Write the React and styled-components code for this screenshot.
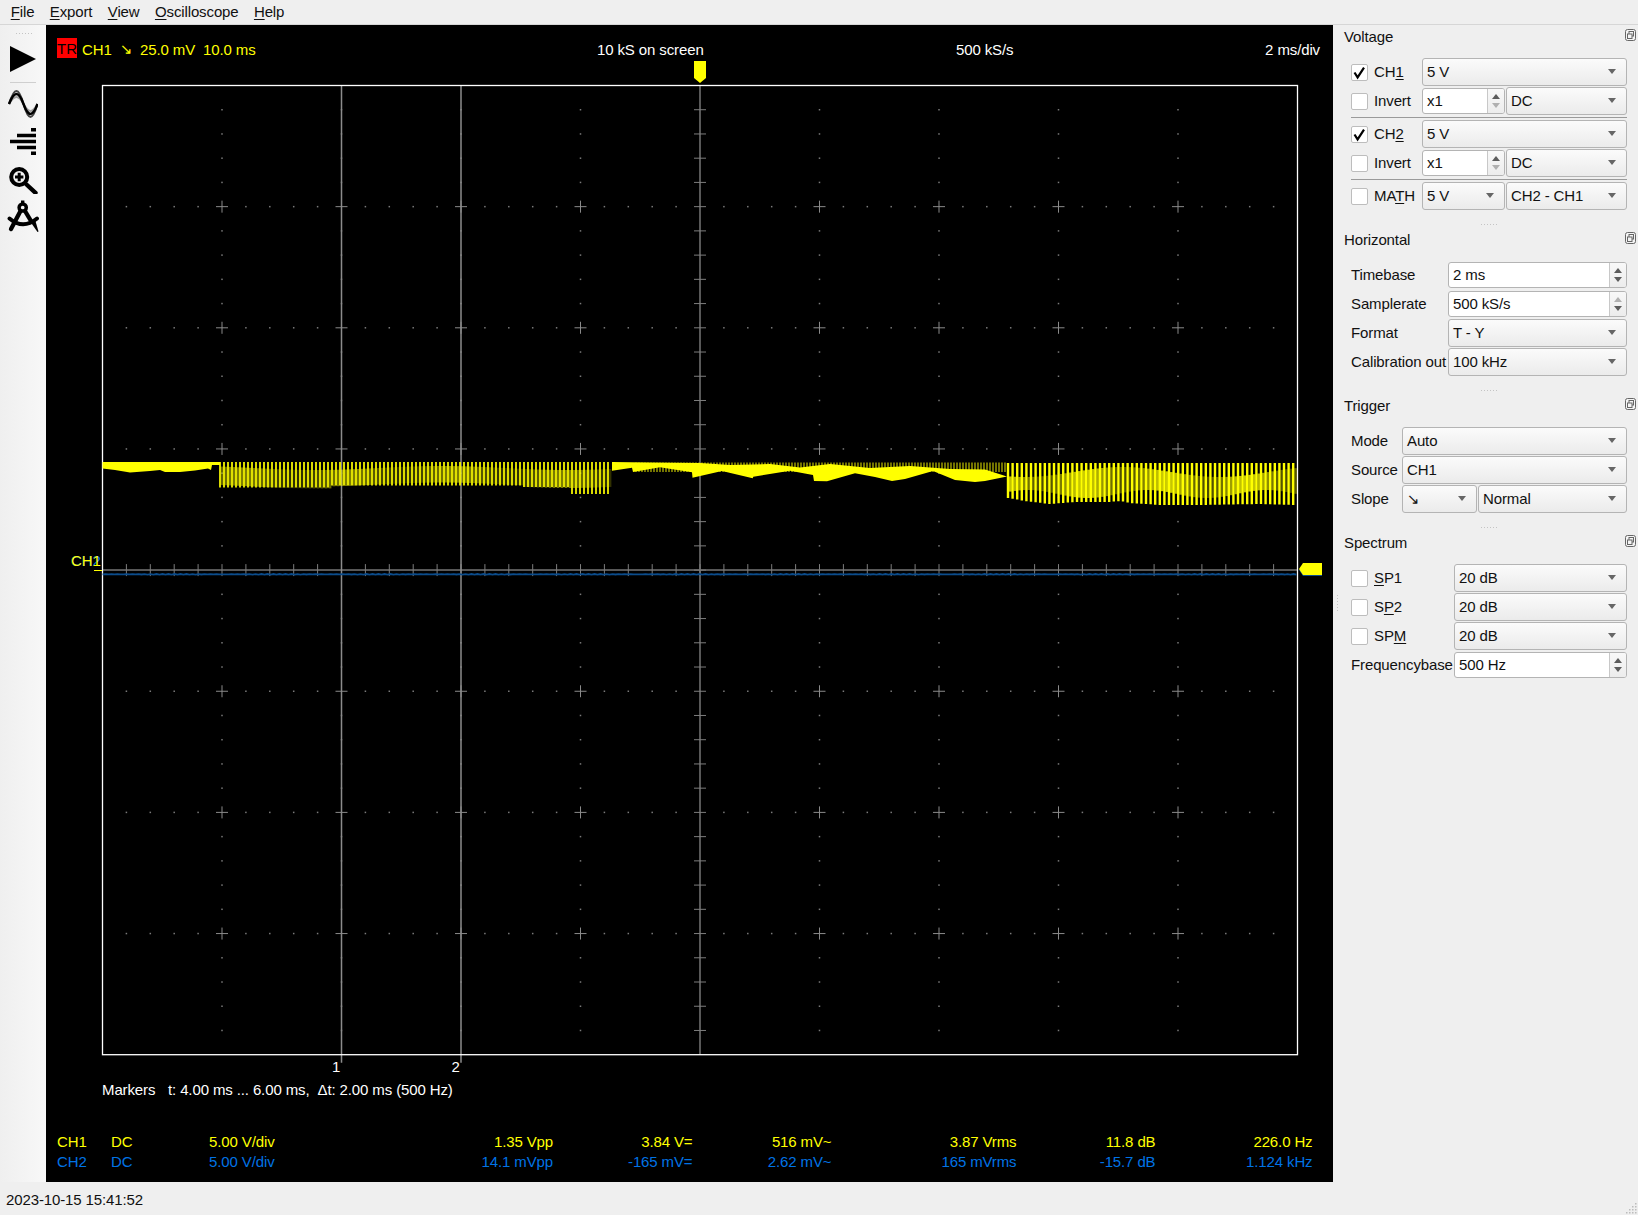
import * as React from "react";
import styled, { createGlobalStyle } from "styled-components";

const YELLOW = "#ffff00";
const BLUE = "#0073e6";
const FONT = `"Liberation Sans", "DejaVu Sans", sans-serif`;

const GlobalStyle = createGlobalStyle`
  html, body {
    margin: 0;
    padding: 0;
    background: #efefef;
  }
  body {
    font-family: ${FONT};
    font-size: 15px;
    letter-spacing: -0.12px;
    color: #111;
  }
`;

const Window = styled.div`
  width: 1638px;
  height: 1215px;
  display: flex;
  flex-direction: column;
  overflow: hidden;
  background: #efefef;
`;

const MenuBar = styled.div`
  height: 24px;
  flex: none;
  display: flex;
  align-items: center;
  padding-left: 3px;
  border-bottom: 1px solid #d6d6d6;
`;

const MenuItem = styled.div`
  padding: 0 7.7px;
  margin-bottom: 1px;
`;

const Mnemonic = styled.span`
  text-decoration: underline;
  text-underline-offset: 2px;
`;

const Main = styled.div`
  flex: 1;
  display: flex;
  min-height: 0;
`;

const ToolBar = styled.div`
  width: 46px;
  flex: none;
  display: flex;
  flex-direction: column;
  align-items: center;
  background: linear-gradient(90deg, #efefef, #f8f8f8);
`;

const ToolHandle = styled.div`
  width: 17px;
  height: 3px;
  margin-top: 7px;
  margin-bottom: 5px;
  background-image: radial-gradient(#c4c4c4 0.6px, transparent 0.7px);
  background-size: 3px 3px;
`;

const ToolButton = styled.div`
  width: 36px;
  height: 37.5px;
  display: flex;
  align-items: center;
  justify-content: center;
`;

const ToolSeparator = styled.div`
  width: 26px;
  height: 1px;
  margin: 4px 0 3px;
  background: #cfcfcf;
`;

const Scope = styled.div`
  width: 1287px;
  flex: none;
  background: #000;
  color: #fff;
  display: flex;
  flex-direction: column;
`;

const ScopeHeader = styled.div`
  height: 35px;
  box-sizing: border-box;
  flex: none;
  display: grid;
  grid-template-columns: 540px 359px 1fr auto;
  align-items: center;
  padding: 13px 13px 0 11px;
`;

const TriggerInfo = styled.div`
  display: flex;
  align-items: center;
  color: ${YELLOW};
  white-space: pre;
`;

const TriggerBadge = styled.span`
  width: 20px;
  height: 20px;
  margin: -2px 5px 0 0;
  background: #ff0000;
  color: #000;
  display: flex;
  align-items: center;
  justify-content: center;
`;

const TriggerField = styled.span`
  width: ${(props) => props.$width}px;
`;

const PlotSvg = styled.svg`
  display: block;
  flex: none;
  width: 1287px;
  height: 1015px;
`;

const MarkerLine = styled.div`
  height: 20px;
  flex: none;
  margin-top: 4px;
  padding-left: 56px;
  display: flex;
  align-items: center;
  white-space: pre;
`;

const MarkerTitle = styled.span`
  width: 66px;
`;

const Measurements = styled.div`
  margin-top: auto;
  padding: 0 21px 11px 11px;
  display: grid;
  grid-template-columns: 54px 98px 100px 244px 139.5px 139px 185px 139px 157px;
  grid-auto-rows: 20px;
  align-items: center;
`;

const Cell = styled.div`
  color: ${(props) => props.$color};
  text-align: ${(props) => (props.$right ? "right" : "left")};
`;

const Panel = styled.div`
  flex: 1;
  display: flex;
  min-width: 0;
`;

const SplitterRail = styled.div`
  width: 11px;
  flex: none;
  display: flex;
  align-items: center;
  padding-left: 4px;
  box-sizing: border-box;
`;

const SplitterGrip = styled.div`
  width: 1px;
  height: 17px;
  background: repeating-linear-gradient(180deg, #c4c4c4 0 1px, transparent 1px 3px);
`;

const Docks = styled.div`
  flex: 1;
  padding-right: 2px;
  min-width: 0;
`;

const DockTitle = styled.div`
  height: 22px;
  display: flex;
  align-items: center;
  justify-content: space-between;
`;

const FloatIcon = styled.svg`
  width: 11px;
  height: 12px;
  margin-top: -2px;
`;

const DockBody = styled.div`
  margin: 11px 9px 0 7px;
  display: grid;
  grid-template-columns: ${(props) => props.$columns};
  column-gap: 1px;
  row-gap: 1px;
  align-items: center;
`;

const DockHandle = styled.div`
  width: 17px;
  height: 1px;
  margin: 14px auto 3px;
  position: relative;
  left: -1px;
  background: repeating-linear-gradient(90deg, #c4c4c4 0 1px, transparent 1px 3px);
`;

const Separator = styled.div`
  grid-column: 1 / -1;
  height: 1px;
  margin: 1px 0;
  background: #9a9a9a;
`;

const FieldLabel = styled.div`
  white-space: nowrap;
  margin-bottom: 1px;
`;

const CheckRow = styled.div`
  display: flex;
  align-items: center;
  gap: 6px;
  white-space: nowrap;
`;

const CheckText = styled.span`
  margin-bottom: 1px;
`;

const CheckBox = styled.div`
  width: 17px;
  height: 17px;
  box-sizing: border-box;
  flex: none;
  background: #fff;
  border: 1px solid #bdbdbd;
  border-radius: 2px;
  display: flex;
`;

const ComboBox = styled.div`
  grid-column: span ${(props) => props.$span || 1};
  height: 28px;
  box-sizing: border-box;
  border: 1px solid #b4b4b4;
  border-radius: 3px;
  background: linear-gradient(180deg, #fbfbfb, #ebebeb);
  display: flex;
  align-items: center;
  justify-content: space-between;
  padding: 0 10px 1px 4px;
  white-space: nowrap;
  min-width: 0;
`;

const Caret = styled.div`
  width: 0;
  height: 0;
  flex: none;
  border-left: 4.5px solid transparent;
  border-right: 4.5px solid transparent;
  border-top: 5px solid #666;
`;

const SpinBox = styled.div`
  grid-column: span ${(props) => props.$span || 1};
  height: 26px;
  margin: 1px 0;
  box-sizing: border-box;
  border: 1px solid #b4b4b4;
  border-radius: 3px;
  background: #fff;
  display: flex;
  align-items: center;
  overflow: hidden;
`;

const SpinValue = styled.div`
  flex: 1;
  padding: 0 0 1px 4px;
`;

const SpinButtons = styled.div`
  width: 16px;
  height: 100%;
  flex: none;
  border-left: 1px solid #c8c8c8;
  background: linear-gradient(180deg, #f8f8f8, #ececec);
  display: flex;
  flex-direction: column;
  align-items: center;
  justify-content: center;
  gap: 4px;
`;

const SpinArrow = styled.div`
  width: 0;
  height: 0;
  border-left: 4.5px solid transparent;
  border-right: 4.5px solid transparent;
  ${(props) => (props.$up ? "border-bottom" : "border-top")}: 5px solid ${(props) =>
    props.$dim ? "#b0b0b0" : "#5c5c5c"};
`;

const StatusBar = styled.div`
  height: 33px;
  box-sizing: border-box;
  flex: none;
  display: flex;
  align-items: center;
  justify-content: space-between;
  padding: 1px 1px 0 6px;
`;

const SizeGrip = styled.svg`
  width: 11px;
  height: 11px;
  align-self: flex-end;
  margin-bottom: 1px;
`;

const Combo = ({ value, span }) => (
  <ComboBox $span={span}>
    <span>{value}</span>
    <Caret />
  </ComboBox>
);

const Spin = ({ value, upDim, downDim, span }) => (
  <SpinBox $span={span}>
    <SpinValue>{value}</SpinValue>
    <SpinButtons>
      <SpinArrow $up $dim={upDim} />
      <SpinArrow $dim={downDim} />
    </SpinButtons>
  </SpinBox>
);

const Check = ({ checked, children }) => (
  <CheckRow>
    <CheckBox>
      {checked && (
        <svg width="15" height="15" viewBox="0 0 15 15">
          <path d="M2.5 7.5 L5.6 12.4 L12 2.6" fill="none" stroke="#000" strokeWidth="2.2" />
        </svg>
      )}
    </CheckBox>
    <CheckText>{children}</CheckText>
  </CheckRow>
);

const Dock = ({ title, columns, last, children }) => (
  <div>
    <DockTitle>
      {title}
      <FloatIcon viewBox="0 0 11 12">
        <rect x="0.5" y="0.5" width="10" height="11" rx="2" fill="#f4f4f4" stroke="#666" />
        <rect x="4" y="2.5" width="4.5" height="4.5" fill="none" stroke="#666" />
        <rect x="2.5" y="5" width="4.5" height="4.5" fill="#f4f4f4" stroke="#666" />
      </FloatIcon>
    </DockTitle>
    <DockBody $columns={columns}>{children}</DockBody>
    {!last && <DockHandle />}
  </div>
);

// half-period arches for the toolbar sine icon, amplitude a around the middle
const sinePath = (a) =>
  `M1 15C6.4 ${15 - 1.33 * a} 10.6 ${15 - 1.33 * a} 15.5 15S24.6 ${15 + 1.33 * a} 29.5 15`;

// plot geometry, in page coordinates so the numbers can be read off the screenshot
const LEFT = 102.5;
const TOP = 85.5;
const DIV_W = 119.5;
const DIV_H = 121.15;
const RIGHT = LEFT + DIV_W * 10;
const BOTTOM = TOP + DIV_H * 8;
const MID_X = LEFT + DIV_W * 5;
const MID_Y = TOP + DIV_H * 4;

const lerp = (pts, x) => {
  for (let i = 1; i < pts.length; i++) {
    if (x <= pts[i][0]) {
      const [x0, y0] = pts[i - 1];
      const [x1, y1] = pts[i];
      return y0 + ((y1 - y0) * (x - x0)) / (x1 - x0 || 1);
    }
  }
  return pts[pts.length - 1][1];
};

const polygon = (top, bottom) =>
  [...top, ...[...bottom].reverse()].map((p) => p.join(",")).join(" ");

const gridPath = () => {
  const crosses = [];
  const dots = [];
  for (let i = 0; i <= 10; i++) {
    for (let j = 0; j <= 8; j++) {
      const x = LEFT + i * DIV_W;
      const y = TOP + j * DIV_H;
      const inside = i > 0 && i < 10 && j > 0 && j < 8;
      if (inside && i !== 5 && j !== 4) crosses.push(`M${x - 6} ${y}H${x + 6}M${x} ${y - 6}V${y + 6}`);
      for (let k = 1; k < 5; k++) {
        if (j > 0 && j < 8 && j !== 4 && i < 10) dots.push([x + (k * DIV_W) / 5, y]);
        if (i > 0 && i < 10 && i !== 5 && j < 8) dots.push([x, y + (k * DIV_H) / 5]);
      }
    }
  }
  return { crosses: crosses.join(""), dots };
};

const axisTicks = () => {
  let d = "";
  for (let i = 1; i < 50; i++) {
    const x = LEFT + (i * DIV_W) / 5;
    d += `M${x} ${MID_Y - 6}V${MID_Y + 6}`;
  }
  for (let j = 1; j < 40; j++) {
    const y = TOP + (j * DIV_H) / 5;
    d += `M${MID_X - 6} ${y}H${MID_X + 6}`;
  }
  return d;
};

const BOTTOM_A = [[102.5, 468.5], [115, 470], [130, 472.5], [150, 471], [160, 470], [165, 472], [180, 472], [195, 470.5], [208, 468.5], [211, 470], [212, 465], [220, 465]];
const BOTTOM_C = [[612, 470.7], [632, 467.7], [633, 472], [660, 467.3], [692, 472.3], [692.5, 477.7], [722, 471], [752.7, 478.3], [753.3, 476.7], [790, 470.7], [813, 475], [814, 481], [827, 481.3], [855, 473.3], [875, 477], [892, 481], [905, 479], [933, 471], [955, 480], [975, 482], [985, 481], [1007, 476.5]];
const TOP_C = [[612, 462], [650, 462.5], [700, 463], [730, 465], [770, 464], [800, 467.5], [830, 464], [870, 468], [910, 466], [950, 469], [985, 469.5], [1007, 476.5]];
const ENV_D = [[1008, 498], [1025, 501], [1050, 504], [1075, 502], [1090, 502], [1110, 502], [1120, 501], [1130, 503], [1160, 505], [1200, 505], [1260, 504], [1297, 505]];

const bottomB = (x) => {
  if (x >= 572) return 494;
  if (x < 330) return 487.5;
  return 485.5 + (x > 520 ? 1.5 : 0);
};

const buildTrace = () => {
  const bars = [];
  const glow = [];
  for (let x = 220; x < 612; x += 4) {
    const b = bottomB(x);
    bars.push(`M${x} 462V${b}`);
    glow.push({
      x: x + 0.6,
      y: 468 + 2 * Math.sin(x / 40),
      w: 2.8,
      h: (x >= 572 ? 486 : b - 1) - 468,
      o: 0.34 + 0.16 * Math.sin(x / 17),
    });
  }
  const ripple = [];
  for (let x = 636; x < 1008; x += 3) ripple.push(`M${x} 462.5V472`);
  const barsD = [];
  for (let x = 1008; x < 1296; x += 4.6) {
    barsD.push(`M${x} 463V${lerp(ENV_D, x)}`);
    const t = 472 + 5 * Math.sin(x / 31);
    const bot = 494 + 4 * Math.sin(x / 19 + 1);
    glow.push({ x: x + 1, y: t, w: 2.8, h: bot - t, o: 0.55 + 0.25 * Math.sin(x / 13) });
  }
  const blue = [];
  for (let x = LEFT; x < RIGHT; x += 3) {
    blue.push(`${x},${574.3 + 0.3 * Math.sin(x * 7.3)}`);
  }
  return {
    bars: bars.join(""),
    glow,
    ripple: ripple.join(""),
    barsD: barsD.join(""),
    blue: blue.join(" "),
  };
};

const Plot = () => {
  const { crosses, dots } = React.useMemo(gridPath, []);
  const ticks = React.useMemo(axisTicks, []);
  const trace = React.useMemo(buildTrace, []);
  const topA = [[102.5, 462], [220, 462]];
  const markerBottom = BOTTOM + 8;
  return (
    <PlotSvg viewBox="46 60 1287 1015">
      <path d={crosses} stroke="#8a8a8a" strokeWidth="1" fill="none" />
      {dots.map(([x, y], i) => (
        <rect key={i} x={x - 0.75} y={y - 0.75} width="1.5" height="1.5" fill="#7a7a7a" />
      ))}
      <path d={`M${LEFT} ${MID_Y}H${RIGHT}`} stroke="#585858" strokeWidth="2" />
      <path d={`M${MID_X} ${TOP}V${BOTTOM}`} stroke="#585858" strokeWidth="2" />
      <path d={ticks} stroke="#7d7d7d" strokeWidth="1" />
      <path
        d={`M${LEFT + DIV_W * 2} ${TOP}V${markerBottom}M${LEFT + DIV_W * 3} ${TOP}V${markerBottom}`}
        stroke="#8c8c8c"
        strokeWidth="1.5"
      />
      <rect x={LEFT} y={TOP} width={RIGHT - LEFT} height={BOTTOM - TOP} fill="none" stroke="#fff" strokeWidth="1.3" />

      <polyline points={trace.blue} fill="none" stroke="#0b4c8c" strokeWidth="1.8" />

      {trace.glow.map((g, i) => (
        <rect key={i} x={g.x} y={g.y} width={g.w} height={g.h} fill={YELLOW} opacity={g.o} />
      ))}
      <path d={trace.bars} stroke={YELLOW} strokeWidth="1.7" />
      <path d={trace.barsD} stroke={YELLOW} strokeWidth="2.4" />
      <path d={trace.ripple} stroke={YELLOW} strokeWidth="1.4" opacity="0.65" />
      <polygon points={polygon(topA, BOTTOM_A)} fill={YELLOW} />
      <polygon points={polygon(TOP_C, BOTTOM_C)} fill={YELLOW} />

      <polygon points="694,61 706,61 706,78 700,83 694,78" fill={YELLOW} />
      <polygon points="1299,570 1303,565 1322,565 1322,576 1303,576" fill="#0b4c8c" />
      <polygon points="1299,569 1303,563 1322,563 1322,575 1303,575" fill={YELLOW} />

      <text x="71" y="566" fill={BLUE}>CH2</text>
      <text x="71" y="566" fill={YELLOW}>CH1</text>
      <path d="M94 570.5H102" stroke={YELLOW} strokeWidth="1" />

      <text x="332" y="1072" fill="#fff">1</text>
      <text x="451.5" y="1072" fill="#fff">2</text>
    </PlotSvg>
  );
};

const CH1_ROW = ["CH1", "DC", "5.00 V/div", "1.35 Vpp", "3.84 V=", "516 mV~", "3.87 Vrms", "11.8 dB", "226.0 Hz"];
const CH2_ROW = ["CH2", "DC", "5.00 V/div", "14.1 mVpp", "-165 mV=", "2.62 mV~", "165 mVrms", "-15.7 dB", "1.124 kHz"];

const MENUS = [
  ["F", "ile"],
  ["E", "xport"],
  ["V", "iew"],
  ["O", "scilloscope"],
  ["H", "elp"],
];

const GRIP_DOTS = [
  [0, 9], [3, 9], [6, 9], [9, 9],
  [3, 6], [6, 6], [9, 6],
  [6, 3], [9, 3],
  [9, 0],
];

export default function App() {
  return (
    <Window>
      <GlobalStyle />
      <MenuBar>
        {MENUS.map(([key, rest]) => (
          <MenuItem key={key}>
            <Mnemonic>{key}</Mnemonic>
            {rest}
          </MenuItem>
        ))}
      </MenuBar>
      <Main>
        <ToolBar>
          <ToolHandle />
          <ToolButton>
            <svg width="26" height="26" viewBox="0 0 26 26">
              <polygon points="0,0 26,13 0,26" fill="#000" />
            </svg>
          </ToolButton>
          <ToolSeparator />
          <ToolButton>
            <svg width="30" height="30" viewBox="0 0 30 30" fill="none">
              <path d={sinePath(7)} stroke="#a0a0a0" strokeWidth="2.2" />
              <path d={sinePath(13)} stroke="#444" strokeWidth="2" />
              <path d={sinePath(10)} stroke="#000" strokeWidth="2.4" />
            </svg>
          </ToolButton>
          <ToolButton>
            <svg width="26" height="27" viewBox="0 0 26 27">
              <path
                d="M21 0h5v3.6h-5zM7 5.8h19v3.4H7zM0 11.8h26v3.4H0zM7 17.8h19v3.4H7zM21 23.4h5V27h-5z"
                fill="#000"
              />
            </svg>
          </ToolButton>
          <ToolButton>
            <svg width="30" height="30" viewBox="0 0 30 30" fill="none" stroke="#000">
              <circle cx="11.2" cy="13" r="8" strokeWidth="4" />
              <path d="M7 13H15.4M11.2 8.8V17.2" strokeWidth="3" />
              <path d="M18.5 20.5L27.5 28.8" strokeWidth="4.4" strokeLinecap="round" />
            </svg>
          </ToolButton>
          <ToolButton>
            <svg width="32" height="35" viewBox="7 200 32 35" fill="none" stroke="#000">
              <circle cx="22.7" cy="208.5" r="3.6" strokeWidth="3.5" />
              <path d="M22.7 201.5V204" strokeWidth="3.4" />
              <path d="M20.5 212L11 230" strokeWidth="4.3" strokeLinecap="round" />
              <path d="M25 212L31 222" strokeWidth="4.3" />
              <polygon points="30.5,223 35,220.5 38.5,232.5 37.5,233" fill="#000" stroke="none" />
              <path d="M9.5 219.5Q23 231 37 219.5" strokeWidth="3.9" strokeLinecap="round" />
            </svg>
          </ToolButton>
        </ToolBar>

        <Scope>
          <ScopeHeader>
            <TriggerInfo>
              <TriggerBadge>TR</TriggerBadge>
              <TriggerField $width={38}>CH1</TriggerField>
              <TriggerField $width={20}>↘</TriggerField>
              <TriggerField $width={63}>25.0 mV</TriggerField>
              <span>10.0 ms</span>
            </TriggerInfo>
            <div>10 kS on screen</div>
            <div>500 kS/s</div>
            <div>2 ms/div</div>
          </ScopeHeader>
          <Plot />
          <MarkerLine>
            <MarkerTitle>Markers</MarkerTitle>
            <span>{"t: 4.00 ms ... 6.00 ms,  Δt: 2.00 ms (500 Hz)"}</span>
          </MarkerLine>
          <Measurements>
            {CH1_ROW.map((text, i) => (
              <Cell key={i} $color={YELLOW} $right={i > 2}>{text}</Cell>
            ))}
            {CH2_ROW.map((text, i) => (
              <Cell key={i} $color={BLUE} $right={i > 2}>{text}</Cell>
            ))}
          </Measurements>
        </Scope>

        <Panel>
          <SplitterRail>
            <SplitterGrip />
          </SplitterRail>
          <Docks>
            <Dock title="Voltage" columns="70px 83px 121px">
              <Check checked>CH<Mnemonic>1</Mnemonic></Check>
              <Combo value="5 V" span={2} />
              <Check>Invert</Check>
              <Spin value="x1" downDim />
              <Combo value="DC" />
              <Separator />
              <Check checked>CH<Mnemonic>2</Mnemonic></Check>
              <Combo value="5 V" span={2} />
              <Check>Invert</Check>
              <Spin value="x1" downDim />
              <Combo value="DC" />
              <Separator />
              <Check>MA<Mnemonic>T</Mnemonic>H</Check>
              <Combo value="5 V" />
              <Combo value="CH2 - CH1" />
            </Dock>

            <Dock title="Horizontal" columns="96px 1fr">
              <FieldLabel>Timebase</FieldLabel>
              <Spin value="2 ms" />
              <FieldLabel>Samplerate</FieldLabel>
              <Spin value="500 kS/s" upDim />
              <FieldLabel>Format</FieldLabel>
              <Combo value="T - Y" />
              <FieldLabel>Calibration out</FieldLabel>
              <Combo value="100 kHz" />
            </Dock>

            <Dock title="Trigger" columns="50px 75px 1fr">
              <FieldLabel>Mode</FieldLabel>
              <Combo value="Auto" span={2} />
              <FieldLabel>Source</FieldLabel>
              <Combo value="CH1" span={2} />
              <FieldLabel>Slope</FieldLabel>
              <Combo value="↘" />
              <Combo value="Normal" />
            </Dock>

            <Dock title="Spectrum" columns="102px 1fr" last>
              <Check><Mnemonic>S</Mnemonic>P1</Check>
              <Combo value="20 dB" />
              <Check>S<Mnemonic>P</Mnemonic>2</Check>
              <Combo value="20 dB" />
              <Check>SP<Mnemonic>M</Mnemonic></Check>
              <Combo value="20 dB" />
              <FieldLabel>Frequencybase</FieldLabel>
              <Spin value="500 Hz" />
            </Dock>
          </Docks>
        </Panel>
      </Main>
      <StatusBar>
        2023-10-15 15:41:52
        <SizeGrip viewBox="0 0 11 11">
          {GRIP_DOTS.map(([x, y]) => (
            <rect key={`${x}-${y}`} x={x} y={y} width="1.5" height="1.5" fill="#bcbcbc" />
          ))}
        </SizeGrip>
      </StatusBar>
    </Window>
  );
}
